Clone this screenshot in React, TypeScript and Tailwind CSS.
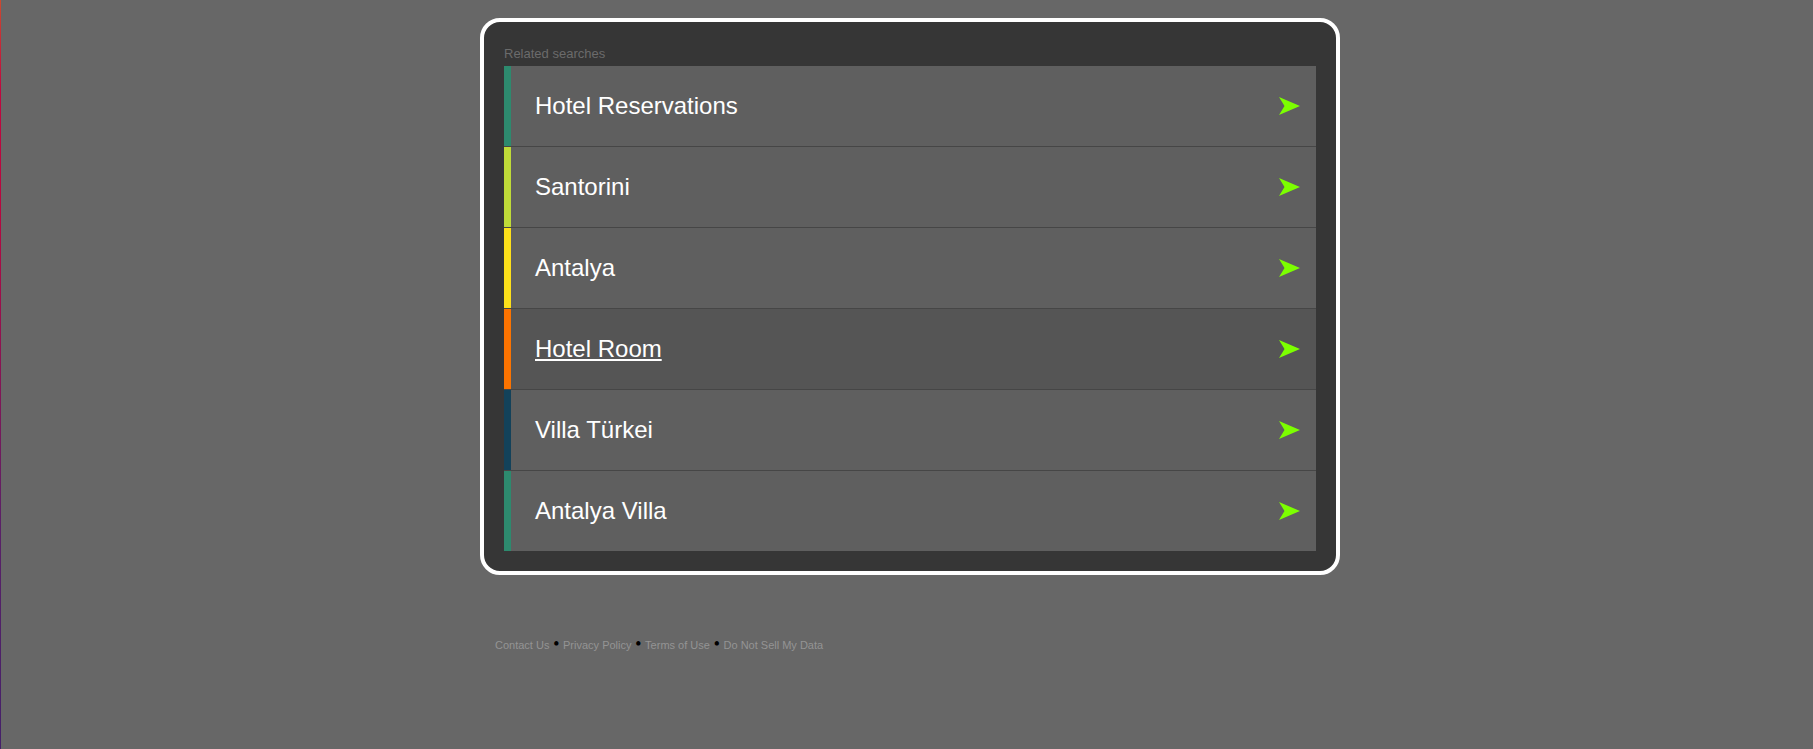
import { Fragment } from "react";

const searches = [
  { label: "Hotel Reservations", accent: "border-[#2d8a6e]" },
  { label: "Santorini", accent: "border-[#bfdb38]" },
  { label: "Antalya", accent: "border-[#fde01a]" },
  { label: "Hotel Room", accent: "border-[#fc7300]", active: true },
  { label: "Villa Türkei", accent: "border-[#13425a]" },
  { label: "Antalya Villa", accent: "border-[#2d8a6e]" },
];

const footerLinks = ["Contact Us", "Privacy Policy", "Terms of Use", "Do Not Sell My Data"];

function Arrow() {
  return (
    <svg viewBox="0 0 21 18" className="h-[18px] w-[21px] shrink-0" fill="#7cff00" aria-hidden="true">
      <path d="M0 0 L21 9 L0 18 L5.5 9 Z" />
    </svg>
  );
}

export default function App() {
  return (
    <div className="flex min-h-screen bg-[#676767] font-['Liberation_Sans',Arial,sans-serif]">
      <div className="w-px shrink-0 bg-[linear-gradient(to_bottom,#cc4a30,#c0083f_12%,#b8083f_28%,#5a2068_70%,#44206a)]" />
      <div className="min-w-0 flex-1 pt-[18px] pl-1.5">
        <main className="mx-auto max-w-[860px] rounded-[20px] border-4 border-white bg-[#363636] p-5">
          <h1 className="py-0.5 text-[13px] leading-5 text-[#6b6b6b]">Related searches</h1>
          <ul className="flex flex-col gap-px bg-[#464646]">
            {searches.map((item) => (
              <li key={item.label}>
                <a
                  href="#"
                  className={`flex h-20 items-center justify-between border-l-[7px] pr-4 pl-6 text-2xl text-white ${item.accent} ${
                    item.active ? "bg-[#555555] underline" : "bg-[#5f5f5f]"
                  }`}
                >
                  <span>{item.label}</span>
                  <Arrow />
                </a>
              </li>
            ))}
          </ul>
        </main>
        <footer className="mx-auto mt-[59px] max-w-[860px] px-[15px] font-['Liberation_Serif',serif] text-base leading-5 text-black">
          {footerLinks.map((label, i) => (
            <Fragment key={label}>
              {i > 0 && (
                <>
                  {" "}
                  <b>•</b>{" "}
                </>
              )}
              <a href="#" className="font-['Liberation_Sans',Arial,sans-serif] text-[11px] text-[#949494]">
                {label}
              </a>
            </Fragment>
          ))}
        </footer>
      </div>
    </div>
  );
}
